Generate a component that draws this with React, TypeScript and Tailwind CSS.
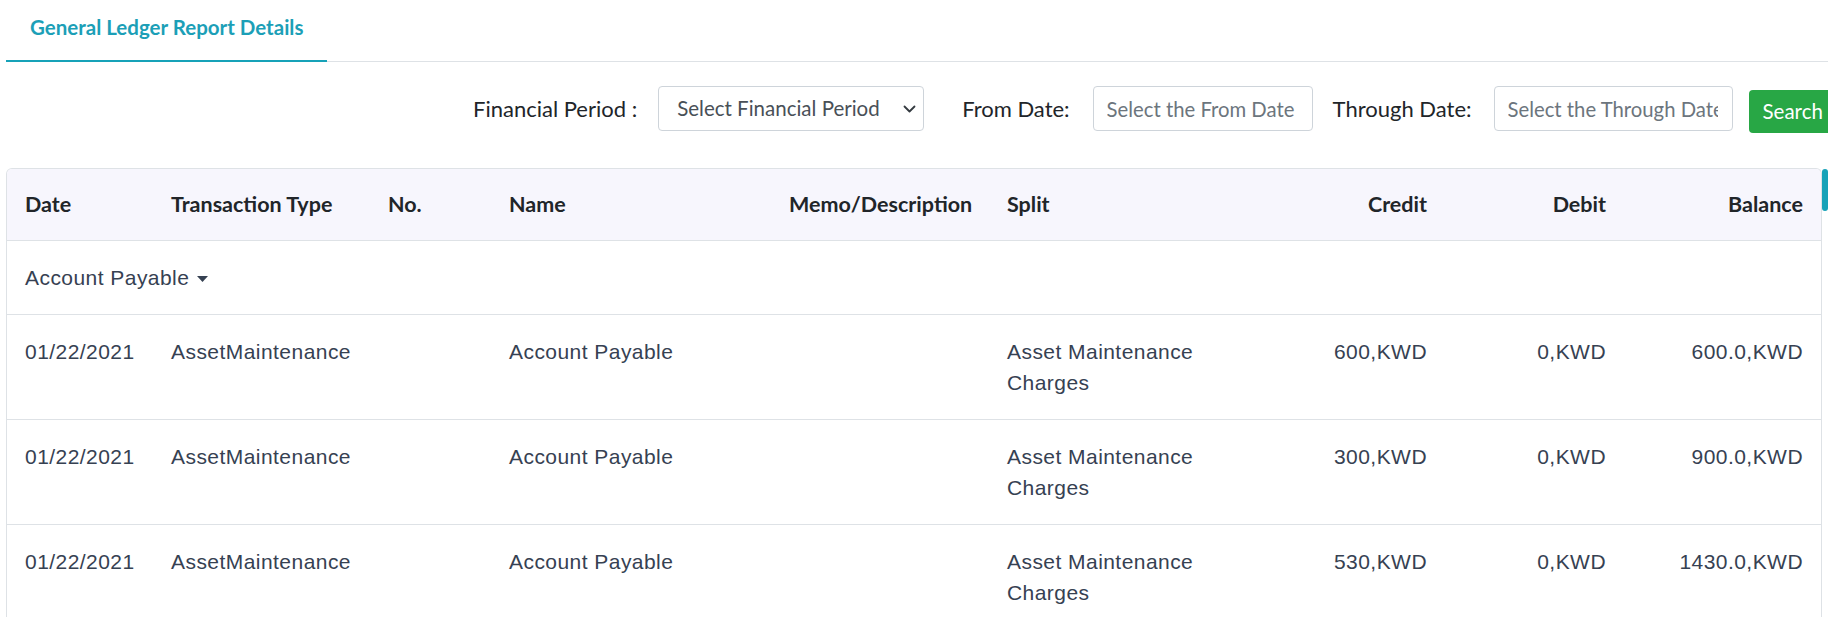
import React from "react";

type Entry = {
  date: string;
  type: string;
  no: string;
  name: string;
  memo: string;
  split: string;
  credit: string;
  debit: string;
  balance: string;
};

const entries: Entry[] = [
  {
    date: "01/22/2021",
    type: "AssetMaintenance",
    no: "",
    name: "Account Payable",
    memo: "",
    split: "Asset Maintenance Charges",
    credit: "600,KWD",
    debit: "0,KWD",
    balance: "600.0,KWD",
  },
  {
    date: "01/22/2021",
    type: "AssetMaintenance",
    no: "",
    name: "Account Payable",
    memo: "",
    split: "Asset Maintenance Charges",
    credit: "300,KWD",
    debit: "0,KWD",
    balance: "900.0,KWD",
  },
  {
    date: "01/22/2021",
    type: "AssetMaintenance",
    no: "",
    name: "Account Payable",
    memo: "",
    split: "Asset Maintenance Charges",
    credit: "530,KWD",
    debit: "0,KWD",
    balance: "1430.0,KWD",
  },
];

const gridCols =
  "grid grid-cols-[146px_217px_121px_280px_218px_258px_198px_179px_197px]";

function ChevronDown() {
  return (
    <svg width="13" height="8" viewBox="0 0 13 8" fill="none" className="shrink-0">
      <path d="M1.5 1.5 6.5 6.5l5-5" stroke="#343a40" strokeWidth="1.8" strokeLinecap="round" strokeLinejoin="round" />
    </svg>
  );
}

function Caret() {
  return (
    <svg width="11" height="6" viewBox="0 0 11 6" className="ml-[8px] inline-block align-middle">
      <path d="M0 0h11L5.5 6z" fill="currentColor" />
    </svg>
  );
}

export default function App() {
  return (
    <div className="h-[617px] w-[1828px] overflow-hidden bg-white pl-1.5 font-['Lato',sans-serif]">
      {/* Tab strip */}
      <div className="flex border-b border-[#dee2e6]">
        <div className="-mb-px border-b-2 border-[#17a2b8] px-6 pb-[18px] pt-3 text-[20.5px] font-bold leading-[30px] text-[#1c9fb7]">
          General Ledger Report Details
        </div>
      </div>

      {/* Filters */}
      <div className="mt-6 flex items-start pl-[467px] text-[22px] text-[#212529]">
        <div className="flex h-[45px] shrink-0 items-center">
          <span>Financial Period :</span>
          <div className="ml-[21px] flex h-[45px] w-[266px] items-center justify-between rounded border border-[#ced4da] pl-[18px] pr-[7px] text-[20.5px] text-[#495057]">
            <span>Select Financial Period</span>
            <ChevronDown />
          </div>
        </div>

        <div className="ml-[38px] flex h-[45px] shrink-0 items-center">
          <span>From Date:</span>
          <input
            readOnly
            placeholder="Select the From Date"
            className="ml-[23px] h-[45px] w-[220px] rounded border border-[#ced4da] px-[13px] text-[20.3px] text-[#495057] outline-none placeholder:text-[#6c757d]"
          />
        </div>

        <div className="ml-[20px] flex h-[45px] shrink-0 items-center">
          <span>Through Date:</span>
          <input
            readOnly
            placeholder="Select the Through Date"
            className="ml-[22px] h-[45px] w-[239px] rounded border border-[#ced4da] pl-[13px] pr-[14px] text-[20.3px] text-[#495057] outline-none placeholder:text-[#6c757d]"
          />
        </div>

        <button className="ml-4 mt-1 h-[43px] shrink-0 rounded bg-[#28a745] px-[14px] text-[20.5px] text-white">
          Search
        </button>
      </div>

      {/* Ledger table */}
      <div className="mt-[35px] flex">
        <div className="w-[1816px] shrink-0 overflow-hidden rounded-t-[6px] border-x border-t border-[#dee2e6]">
          <div className={`${gridCols} border-b border-[#dee2e6] bg-[#f7f6fd] text-[21.5px] font-bold leading-[31px] text-[#212529]`}>
            <div className="px-[18px] py-5">Date</div>
            <div className="px-[18px] py-5">Transaction Type</div>
            <div className="px-[18px] py-5">No.</div>
            <div className="px-[18px] py-5">Name</div>
            <div className="px-[18px] py-5">Memo/Description</div>
            <div className="px-[18px] py-5">Split</div>
            <div className="px-[18px] py-5 text-right">Credit</div>
            <div className="px-[18px] py-5 text-right">Debit</div>
            <div className="px-[18px] py-5 text-right">Balance</div>
          </div>

          <div className="font-['Liberation_Sans',Arial,sans-serif] text-[21px] leading-[31px] tracking-[0.45px] text-[#364152]">
            <div className="border-b border-[#dee2e6] px-[18px] py-[21px]">
              Account Payable
              <Caret />
            </div>

            {entries.map((e, i) => (
              <div key={i} className={`${gridCols} border-b border-[#dee2e6]`}>
                <div className="px-[18px] py-[21px]">{e.date}</div>
                <div className="px-[18px] py-[21px]">{e.type}</div>
                <div className="px-[18px] py-[21px]">{e.no}</div>
                <div className="px-[18px] py-[21px]">{e.name}</div>
                <div className="px-[18px] py-[21px]">{e.memo}</div>
                <div className="px-[18px] py-[21px]">{e.split}</div>
                <div className="px-[18px] py-[21px] text-right">{e.credit}</div>
                <div className="px-[18px] py-[21px] text-right">{e.debit}</div>
                <div className="px-[18px] py-[21px] text-right">{e.balance}</div>
              </div>
            ))}
          </div>
        </div>

        {/* Scroll track */}
        <div className="w-[6px] shrink-0 pt-px">
          <div className="h-[42px] w-[6px] rounded-[3px] bg-[#17a2b8]" />
        </div>
      </div>
    </div>
  );
}
